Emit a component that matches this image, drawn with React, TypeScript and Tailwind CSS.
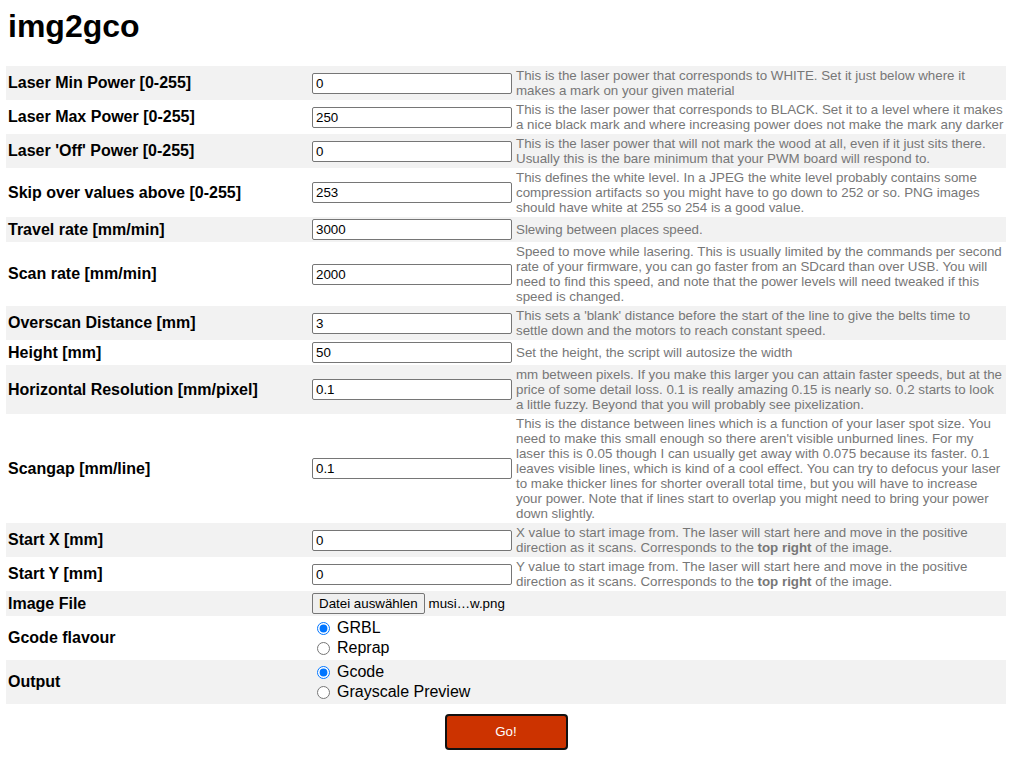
const rows: { label: string; value: string; desc: React.ReactNode }[] = [
  {
    label: 'Laser Min Power [0-255]',
    value: '0',
    desc: 'This is the laser power that corresponds to WHITE. Set it just below where it makes a mark on your given material',
  },
  {
    label: 'Laser Max Power [0-255]',
    value: '250',
    desc: 'This is the laser power that corresponds to BLACK. Set it to a level where it makes a nice black mark and where increasing power does not make the mark any darker',
  },
  {
    label: "Laser 'Off' Power [0-255]",
    value: '0',
    desc: 'This is the laser power that will not mark the wood at all, even if it just sits there. Usually this is the bare minimum that your PWM board will respond to.',
  },
  {
    label: 'Skip over values above [0-255]',
    value: '253',
    desc: 'This defines the white level. In a JPEG the white level probably contains some compression artifacts so you might have to go down to 252 or so. PNG images should have white at 255 so 254 is a good value.',
  },
  {
    label: 'Travel rate [mm/min]',
    value: '3000',
    desc: 'Slewing between places speed.',
  },
  {
    label: 'Scan rate [mm/min]',
    value: '2000',
    desc: 'Speed to move while lasering. This is usually limited by the commands per second rate of your firmware, you can go faster from an SDcard than over USB. You will need to find this speed, and note that the power levels will need tweaked if this speed is changed.',
  },
  {
    label: 'Overscan Distance [mm]',
    value: '3',
    desc: "This sets a 'blank' distance before the start of the line to give the belts time to settle down and the motors to reach constant speed.",
  },
  {
    label: 'Height [mm]',
    value: '50',
    desc: 'Set the height, the script will autosize the width',
  },
  {
    label: 'Horizontal Resolution [mm/pixel]',
    value: '0.1',
    desc: 'mm between pixels. If you make this larger you can attain faster speeds, but at the price of some detail loss. 0.1 is really amazing 0.15 is nearly so. 0.2 starts to look a little fuzzy. Beyond that you will probably see pixelization.',
  },
  {
    label: 'Scangap [mm/line]',
    value: '0.1',
    desc: "This is the distance between lines which is a function of your laser spot size. You need to make this small enough so there aren't visible unburned lines. For my laser this is 0.05 though I can usually get away with 0.075 because its faster. 0.1 leaves visible lines, which is kind of a cool effect. You can try to defocus your laser to make thicker lines for shorter overall total time, but you will have to increase your power. Note that if lines start to overlap you might need to bring your power down slightly.",
  },
  {
    label: 'Start X [mm]',
    value: '0',
    desc: (
      <>
        X value to start image from. The laser will start here and move in the positive direction as it scans. Corresponds to the <b>top right</b> of the image.
      </>
    ),
  },
  {
    label: 'Start Y [mm]',
    value: '0',
    desc: (
      <>
        Y value to start image from. The laser will start here and move in the positive direction as it scans. Corresponds to the <b>top right</b> of the image.
      </>
    ),
  },
];

function Row({ gray, label, children }: { gray: boolean; label: string; children: React.ReactNode }) {
  return (
    <div className={`grid grid-cols-[304px_1fr] items-center ${gray ? 'bg-[#f2f2f2]' : 'bg-white'}`}>
      <div className="pl-[2px] text-[16px] font-bold leading-[18px] text-black">{label}</div>
      {children}
    </div>
  );
}

function Radio({ name, label, checked }: { name: string; label: string; checked?: boolean }) {
  return (
    <label className="flex h-[20px] items-center text-[16px] text-black">
      <input
        type="radio"
        name={name}
        defaultChecked={checked}
        className="ml-[5px] mr-[7px] h-[13px] w-[13px] accent-[#0075ff]"
      />
      {label}
    </label>
  );
}

export default function App() {
  return (
    <div className="min-h-screen bg-white font-['Liberation_Sans',Arial,sans-serif] text-black">
      <h1 className="px-[8px] pt-[8px] mb-[21px] text-[32px] font-bold leading-[37px]">img2gco</h1>

      <div className="mx-[6px] w-[1000px]">
        {rows.map((r, i) => (
          <Row key={r.label} gray={i % 2 === 0} label={r.label}>
            <div className="grid grid-cols-[204px_1fr] items-center py-[2px]">
              <div className="pl-[2px]">
                <input
                  type="text"
                  defaultValue={r.value}
                  className="block h-[21px] w-[200px] rounded-[2px] border border-[#767676] bg-white px-[3px] text-[13.333px] text-black"
                />
              </div>
              <div className="pl-[2px] pr-[2px] text-[13.333px] leading-[15px] text-[#777]">{r.desc}</div>
            </div>
          </Row>
        ))}

        <Row gray label="Image File">
          <div className="flex items-center py-[2px] pl-[2px]">
            <span className="flex h-[21px] items-center rounded-[2px] border border-[#767676] bg-[#efefef] px-[6px] text-[13.333px]">
              Datei auswählen
            </span>
            <span className="ml-[4px] text-[13.333px]">musi…w.png</span>
          </div>
        </Row>

        <Row gray={false} label="Gcode flavour">
          <div className="flex flex-col py-[2px] pl-[2px]">
            <Radio name="flavour" label="GRBL" checked />
            <Radio name="flavour" label="Reprap" />
          </div>
        </Row>

        <Row gray label="Output">
          <div className="flex flex-col py-[2px] pl-[2px]">
            <Radio name="output" label="Gcode" checked />
            <Radio name="output" label="Grayscale Preview" />
          </div>
        </Row>

        <div className="flex justify-center pt-[10px]">
          <button className="h-[36px] w-[123px] rounded-[4px] border-2 border-[#111] bg-[#cc3300] text-[13.333px] text-white">
            Go!
          </button>
        </div>
      </div>
    </div>
  );
}
